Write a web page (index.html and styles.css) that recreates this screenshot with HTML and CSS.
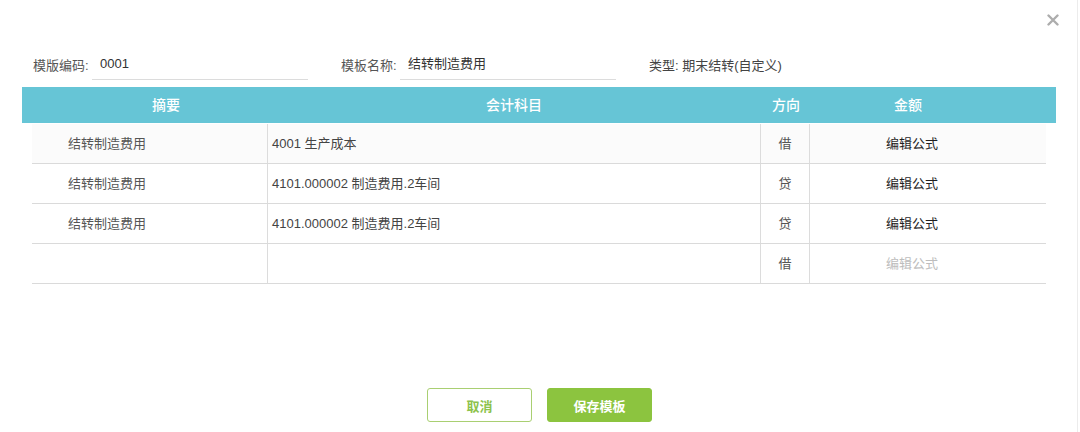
FILE: index.html
```html
<!DOCTYPE html>
<html lang="zh-CN">
<head>
<meta charset="utf-8">
<link rel="stylesheet" href="styles.css">
</head>
<body>
<div class="dialog">
  <button class="close" aria-label="关闭">
    <svg width="12" height="12" viewBox="0 0 12 12"><path d="M1.5 1.5 L10.5 10.5 M10.5 1.5 L1.5 10.5" stroke="#adadad" stroke-width="2.4" stroke-linecap="round"/></svg>
  </button>
  <div class="form">
    <div class="field">
      <span class="label">模版编码:</span>
      <div class="input">0001</div>
    </div>
    <div class="field">
      <span class="label">模板名称:</span>
      <div class="input">结转制造费用</div>
    </div>
    <div class="field">
      <span class="label type">类型: 期末结转(自定义)</span>
    </div>
  </div>
  <div class="thead">
    <div>摘要</div>
    <div>会计科目</div>
    <div>方向</div>
    <div>金额</div>
    <div></div>
  </div>
  <div class="tbody">
    <div class="row first">
      <div class="c1">结转制造费用</div>
      <div class="c2">4001 生产成本</div>
      <div class="c3">借</div>
      <div class="c4">编辑公式</div>
    </div>
    <div class="row">
      <div class="c1">结转制造费用</div>
      <div class="c2">4101.000002 制造费用.2车间</div>
      <div class="c3">贷</div>
      <div class="c4">编辑公式</div>
    </div>
    <div class="row">
      <div class="c1">结转制造费用</div>
      <div class="c2">4101.000002 制造费用.2车间</div>
      <div class="c3">贷</div>
      <div class="c4">编辑公式</div>
    </div>
    <div class="row">
      <div class="c1"></div>
      <div class="c2"></div>
      <div class="c3">借</div>
      <div class="c4 muted">编辑公式</div>
    </div>
  </div>
  <div class="footer">
    <button class="btn cancel">取消</button>
    <button class="btn save">保存模板</button>
  </div>
</div>
</body>
</html>
```
FILE: styles.css
```css
* { box-sizing: border-box; }
html, body { margin: 0; padding: 0; background: #fff; }
body {
  font-family: "Liberation Sans", "Noto Sans CJK SC", sans-serif;
  font-size: 13px;
  color: #333;
  width: 1080px;
  height: 432px;
  overflow: hidden;
}
.dialog {
  position: relative;
  width: 1078px;
  height: 432px;
  padding: 47px 21px 0 22px;
  border-right: 1px solid #ececec;
}
.close {
  position: absolute;
  top: 13px;
  right: 17px;
  width: 14px;
  height: 14px;
  padding: 1px;
  border: 0;
  background: none;
  display: flex;
  align-items: center;
  justify-content: center;
}
.form {
  display: flex;
  align-items: flex-end;
  gap: 33px;
  padding-left: 11px;
  height: 33px;
}
.field {
  display: flex;
  align-items: center;
  height: 32px;
}
.label { color: #555; white-space: nowrap; width: 59px; }
.label.type { width: auto; color: #444; }
.input {
  width: 216px;
  height: 32px;
  line-height: 31px;
  padding-left: 8px;
  border-bottom: 1px solid #dcdcdc;
  color: #333;
}
.thead {
  margin-top: 7px;
  height: 36px;
  background: #66c5d6;
  display: grid;
  grid-template-columns: 288px 408px 136px 108px 1fr;
  color: #fff;
  font-size: 14px;
  font-weight: 500;
  line-height: 36px;
  text-align: center;
}
.tbody { margin: 0 10px; padding-top: 1px; }
.row {
  display: grid;
  grid-template-columns: 235px 493px 50px 236px;
  height: 40px;
  border-bottom: 1px solid #dadada;
}
.row.first { background: #fbfbfb; }
.row > div { line-height: 39px; white-space: nowrap; }
.c1 { padding-left: 36px; color: #555; }
.c2 { padding-left: 4px; border-left: 1px solid #dcdcdc; color: #444; }
.c3 { text-align: center; border-left: 1px solid #dcdcdc; border-right: 1px solid #dcdcdc; color: #555; }
.c4 { text-align: center; padding-right: 32px; color: #1f1f1f; }
.c4.muted { color: #bdbdbd; }
.footer {
  display: flex;
  justify-content: center;
  gap: 15px;
  margin-top: 104px;
  padding-left: 1px;
}
.btn {
  width: 105px;
  height: 34px;
  border-radius: 3px;
  font-family: "Liberation Sans", "Noto Sans CJK SC", sans-serif;
  font-size: 13px;
  font-weight: 700;
  cursor: pointer;
}
.cancel {
  background: #fff;
  border: 1px solid #a9cf72;
  color: #8dc24c;
}
.save {
  background: #8cc43f;
  border: 1px solid #8cc43f;
  color: #fff;
}
```
